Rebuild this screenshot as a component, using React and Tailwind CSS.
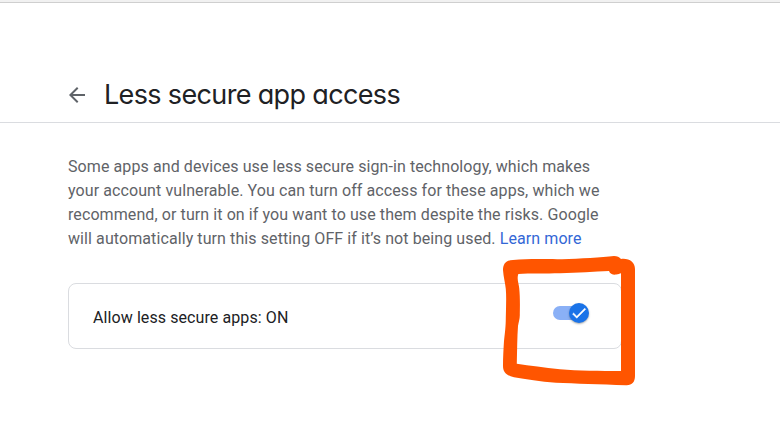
function BackArrow() {
  return (
    <svg viewBox="0 0 24 24" className="size-6 shrink-0 fill-[#5f6368]">
      <path d="M20 11H7.83l5.59-5.59L12 4l-8 8 8 8 1.41-1.41L7.83 13H20v-2z" />
    </svg>
  );
}

function Toggle() {
  return (
    <div className="flex h-5 w-9 items-center">
      <div className="h-3.5 w-7 rounded-full bg-[#8ab0f6]" />
      <div className="-ml-3 flex size-5 shrink-0 items-center justify-center rounded-full bg-[#1a73e8] shadow-[0_1px_2px_rgba(60,64,67,0.45)]">
        <svg viewBox="0 0 24 24" className="size-[18px] fill-white stroke-white stroke-[0.6]">
          <path d="M9 16.17L4.83 12l-1.42 1.41L9 19 21 7l-1.41-1.41z" />
        </svg>
      </div>
    </div>
  );
}

function Highlight() {
  return (
    <svg viewBox="500 250 140 140" className="absolute top-[250px] left-[500px] size-[140px] fill-[#ff5500]">
      <path
        fillRule="evenodd"
        d="M503 270C503 264 506 260 513 260C530 258.500 548 259.400 562 259.200C580 259 602 257 614 256C617 256 619.500 257 621 259C629 258 635 262 635 269V376C635 382 632 385.500 626 385.200C600 384.200 575 383.500 556 382.700C540 381.500 526 379 514 377.200C506 375.500 503 372 503 366C503 357 503.500 349 504 341C505 332 505.800 326 505.800 318C506 308 506.500 297 505.800 289C505 282 503.500 277 503 270ZM518.300 274C530 273 546 273.600 560 273.200C578 273 594 271.500 609 271C610 274 613 275 616 274.600C618.500 274.500 619.500 273.500 621 273.300V371C600 370.800 578 370.800 560 369.200C544 367.500 530 365.500 516.800 363.700C517.200 350 517.200 337 518 326C518.500 322 520 319 519.800 314C520 304 520 296 519.200 288C518.800 283 516.600 279 518.300 274Z"
      />
    </svg>
  );
}

export default function App() {
  return (
    <div className="relative h-[431px] w-full overflow-hidden bg-white font-[Roboto,'Liberation_Sans',sans-serif] text-base tracking-[0.09px] text-[#202124]">
      <div className="h-[3px] border-b border-[#cfcfcf] bg-[#f1f1f1]" />
      <header className="flex h-[120px] items-center border-b border-[#dadce0] pt-16 pl-[65px]">
        <BackArrow />
        <h1 className="ml-[15px] font-[Inter,sans-serif] text-[27px] leading-9 tracking-[-0.65px] whitespace-nowrap [font-feature-settings:'cv11']">
          Less secure app access
        </h1>
      </header>
      <main className="pt-8 pl-[68px]">
        <p className="leading-6 whitespace-nowrap text-[#5f6368]">
          Some apps and devices use less secure sign-in technology, which makes
          <br />
          your account vulnerable. You can turn off access for these apps, which we
          <br />
          recommend, or turn it on if you want to use them despite the risks. Google
          <br />
          will automatically turn this setting OFF if it’s not being used.{" "}
          <a className="text-[#3367d6]">Learn more</a>
        </p>
        <section className="mt-8 flex h-[66px] w-[554px] items-center justify-between rounded-lg border border-[#dadce0] pr-8 pl-6">
          <span className="pt-1">Allow less secure apps: ON</span>
          <div className="pb-1.5">
            <Toggle />
          </div>
        </section>
      </main>
      <Highlight />
    </div>
  );
}
